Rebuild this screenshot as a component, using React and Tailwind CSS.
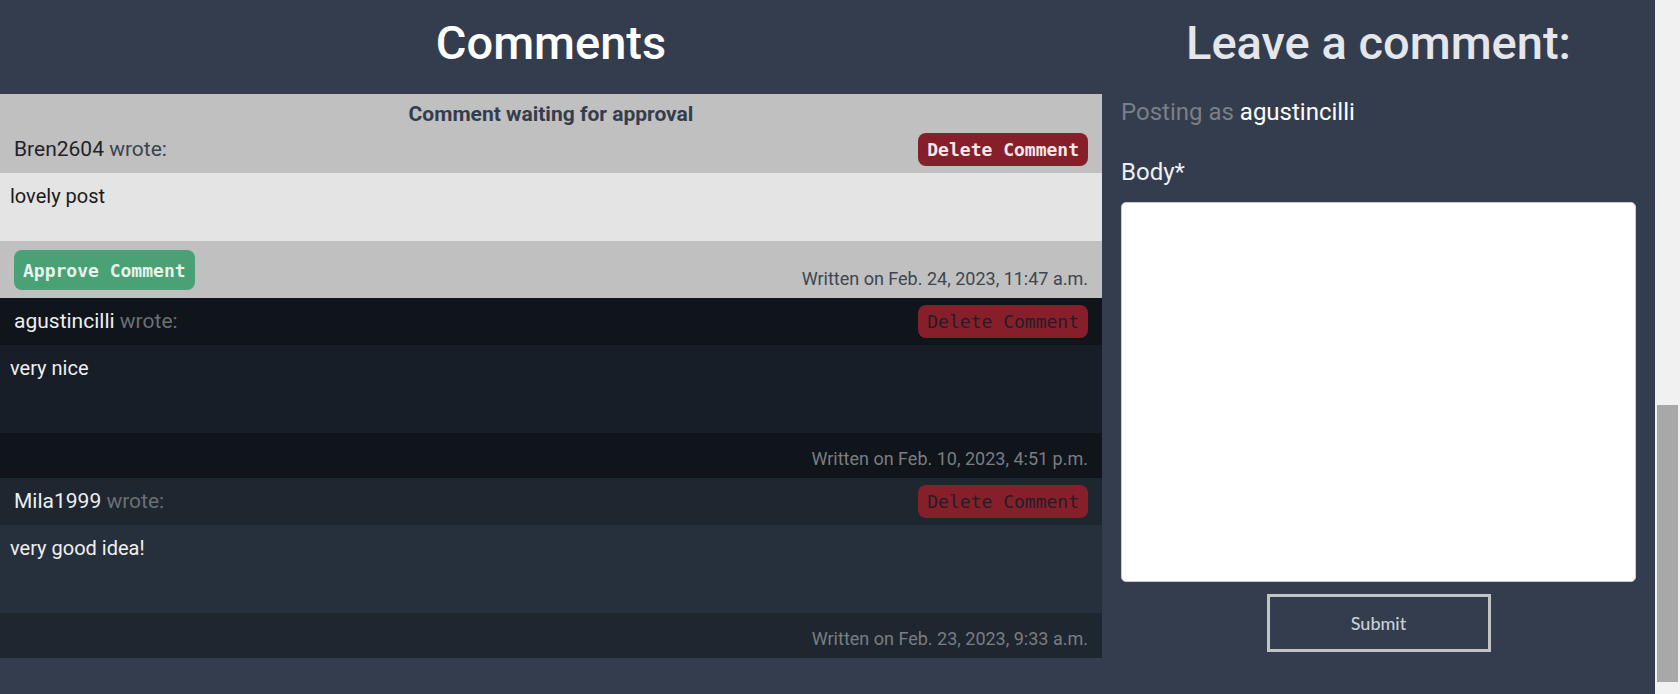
import React from 'react'

const comments = [
  { id: 2, author: 'agustincilli', body: 'very nice', date: 'Feb. 10, 2023, 4:51 p.m.', tone: 'dark' },
  { id: 3, author: 'Mila1999', body: 'very good idea!', date: 'Feb. 23, 2023, 9:33 a.m.', tone: 'slate' },
]

const tones = {
  dark: { bar: 'bg-[#10141b]', body: 'bg-[#171e27]' },
  slate: { bar: 'bg-[#1e2630]', body: 'bg-[#262f3c]' },
}

const mono = "font-['DejaVu_Sans_Mono',monospace]"

function PendingComment() {
  return (
    <div className="bg-[#bfc0bf]">
      <div className="pt-[8px] text-center text-[21px] leading-[24px] font-bold text-[#343d4e]">
        Comment waiting for approval
      </div>
      <div className="flex items-center justify-between px-[14px] py-[7px]">
        <p className="text-[21px]">
          <span className="text-[#1f2328]">Bren2604</span>{' '}
          <span className="text-[#3b4450]">wrote:</span>
        </p>
        <button className={`${mono} h-[33px] px-[9px] rounded-[8px] bg-[#871f2a] text-[18px] font-bold text-[#f6e8e8]`}>
          Delete Comment
        </button>
      </div>
      <div className="h-[68px] bg-[#e4e4e4] px-[10px] pt-[8px] text-[20px] text-[#1a1a1a]">
        lovely post
      </div>
      <div className="flex items-end justify-between px-[14px] pt-[9px] pb-[8px]">
        <button className={`${mono} h-[40px] px-[9px] rounded-[8px] bg-[#49a175] text-[18px] font-bold text-[#e6f4ec]`}>
          Approve Comment
        </button>
        <span className="text-[18px] leading-[22px] text-[#3d4651]">Written on Feb. 24, 2023, 11:47 a.m.</span>
      </div>
    </div>
  )
}

function Comment({ c }) {
  const t = tones[c.tone]
  return (
    <div>
      <div className={`flex items-center justify-between px-[14px] py-[7px] ${t.bar}`}>
        <p className="text-[21px]">
          <span className="text-[#eceff1]">{c.author}</span>{' '}
          <span className="text-[#6c6f74]">wrote:</span>
        </p>
        <button className={`${mono} h-[33px] px-[9px] rounded-[8px] bg-[#871f2a] text-[18px] text-[#1c2029]`}>
          Delete Comment
        </button>
      </div>
      <div className={`h-[88px] px-[10px] pt-[8px] text-[20px] text-[#f0f0f0] ${t.body}`}>
        {c.body}
      </div>
      <div className={`flex h-[45px] items-end justify-end px-[14px] pb-[8px] ${t.bar}`}>
        <span className="text-[18px] leading-[22px] text-[#7a7d82]">Written on {c.date}</span>
      </div>
    </div>
  )
}

export default function App() {
  return (
    <div className="flex h-[694px] overflow-hidden bg-[#333d4e] font-['Roboto',sans-serif]">
      <div className="flex flex-1">
        {/* comments list */}
        <section className="w-[1102px]">
          <h2 className="h-[94px] pt-[14px] text-center text-[47px] leading-[58px] font-medium text-white">
            Comments
          </h2>
          <PendingComment />
          {comments.map(c => <Comment key={c.id} c={c} />)}
        </section>

        {/* form */}
        <section className="flex-1 px-[19px]">
          <h2 className="h-[94px] pt-[14px] text-center text-[47px] leading-[58px] font-medium text-[#e4e6ea]">
            Leave a comment:
          </h2>
          <p className="pt-[3px] text-[24px] leading-[30px]">
            <span className="text-[#7b7f86]">Posting as</span>{' '}
            <span className="text-white">agustincilli</span>
          </p>
          <form className="flex flex-col">
            <label className="mt-[30px] text-[24px] leading-[30px] text-[#eef0f2]">Body*</label>
            <textarea className="mt-[15px] h-[380px] w-full resize-none rounded-[5px] border border-[#c9ccd1] bg-white" />
            <button type="button" className="mx-auto mt-[12px] h-[58px] w-[224px] border-[3px] border-[#c1c3c5] font-['Lato',sans-serif] text-[18px] font-medium text-[#c8d0d8]">
              Submit
            </button>
          </form>
        </section>
      </div>

      {/* scrollbar */}
      <div className="w-[25px] bg-[#f1f1f1] px-[2px] pt-[405px]">
        <div className="h-[277px] bg-[#a8a8a8]" />
      </div>
    </div>
  )
}
